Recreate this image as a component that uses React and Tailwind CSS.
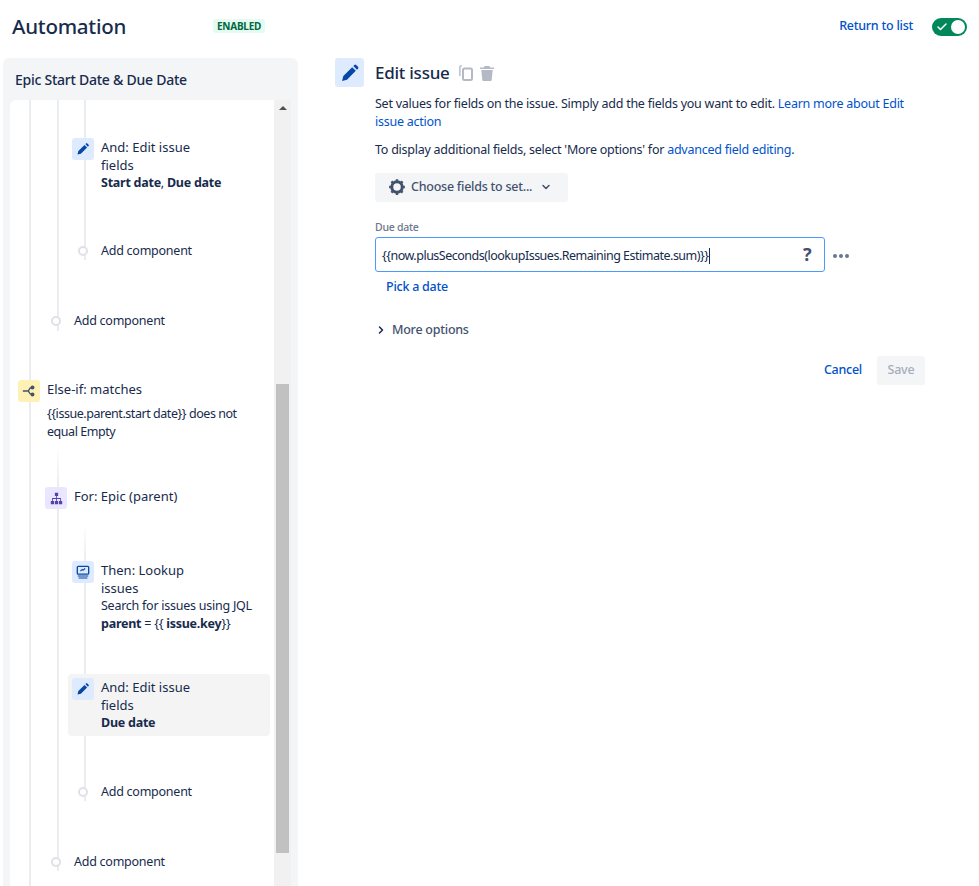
import React from 'react';
import { Check, ChevronDown, ChevronRight } from 'lucide-react';

const font = "font-['Noto_Sans','Open_Sans',sans-serif]";
const nodeTitle = 'text-[13px] tracking-normal';

const PencilIcon = ({ className }) => (
    <svg viewBox="0 0 24 24" className={className} fill="currentColor">
        <path d="M4 15.600 2.500 21.500 8.400 20 19 9.400 14.600 5 4 15.600zM16 3.600l4.400 4.400 1.200-1.200a1.600 1.600 0 0 0 0-2.200L19.400 2.400a1.600 1.600 0 0 0-2.200 0L16 3.600z" />
    </svg>
);

const CopyIcon = ({ className }) => (
    <svg viewBox="0 0 14 16" className={className} fill="none" stroke="currentColor">
        <path d="M3 .9H1.700a.8.8 0 0 0-.8.8V11" strokeWidth="1.400" />
        <rect x="4" y="3.500" width="9" height="11.500" rx="1.500" strokeWidth="2" />
    </svg>
);

const TrashIcon = ({ className }) => (
    <svg viewBox="0 0 16 16" className={className} fill="currentColor">
        <path d="M1 2.500h14V4H1zM5.500 1h5l.6 1.500H4.900zM2.300 5h11.400l-1 10a1 1 0 0 1-1 .9H4.300a1 1 0 0 1-1-.9z" />
    </svg>
);

const BranchIcon = () => (
    <svg viewBox="0 0 16 16" className="w-[14px] h-[14px] text-[#42526e]" fill="none" stroke="currentColor" strokeWidth="1.600">
        <path d="M1 8h6M7 8c1 0 1-4 4-4M7 8c1 0 1 4 4 4" />
        <circle cx="12" cy="4" r="1.500" fill="currentColor" />
        <circle cx="12" cy="12" r="1.500" fill="currentColor" />
    </svg>
);

const HierarchyIcon = () => (
    <svg viewBox="0 0 16 16" className="w-[13px] h-[13px] text-[#5243aa]" fill="currentColor">
        <path d="M6 1h4v4H6zM1 11h4v4H1zM6 11h4v4H6zM11 11h4v4h-4z" />
        <path d="M7.500 5h1v2.500h5V11h-1V8.500h-4V11h-1V8.500h-4V11h-1V7.500h5z" />
    </svg>
);

const LookupIcon = () => (
    <svg viewBox="0 0 16 16" className="w-[14px] h-[14px] text-[#0747a6]" fill="none">
        <rect x="1.500" y="1.500" width="13" height="9" rx="1" stroke="currentColor" strokeWidth="1.500" />
        <path d="M5 7l2-2 1 1 2.500-2" stroke="currentColor" strokeWidth="1.200" />
        <path d="M2 12h12v1.200H2zM3 14.200h10v1.300H3z" fill="currentColor" />
    </svg>
);

const GearIcon = () => (
    <svg viewBox="0 0 24 24" className="w-[18px] h-[18px] text-[#42526e]" fill="none" stroke="currentColor">
        <circle cx="12" cy="12" r="7" strokeWidth="4" />
        <path d="M12 1.500v4M12 18.500v4M1.500 12h4M18.500 12h4M4.600 4.600l2.800 2.800M16.600 16.600l2.800 2.800M19.400 4.600l-2.800 2.800M7.400 16.600l-2.800 2.800" strokeWidth="3.200" />
    </svg>
);

const TreeLine = ({ fade }) => (
    <div className={`absolute left-0 top-0 bottom-0 w-[2px] ${fade ? 'bg-gradient-to-b from-white to-[#ebecf0] to-[40px]' : 'bg-[#ebecf0]'}`} />
);

const NodeIcon = ({ bg, children }) => (
    <div className={`w-[22px] h-[22px] rounded-[3px] flex items-center justify-center shrink-0 ${bg}`}>{children}</div>
);

const AddComponent = ({ className }) => (
    <div className={`relative flex items-center gap-[13px] -ml-[6px] h-[18px] ${className}`}>
        <div className="w-[10px] h-[10px] rounded-full border-2 border-[#dfe1e6] bg-white shrink-0" />
        <span>Add component</span>
    </div>
);

const EditNode = ({ children, className = '' }) => (
    <div className={`relative flex gap-[7px] ${className}`}>
        <NodeIcon bg="bg-[#deebff]"><PencilIcon className="w-[14px] h-[14px] text-[#0747a6]" /></NodeIcon>
        <div className="pt-px">
            <div className={`w-[110px] ${nodeTitle}`}>And: Edit issue fields</div>
            {children}
        </div>
    </div>
);

const App = () => {
    return (
        <div className={`${font} h-screen overflow-hidden bg-white text-[#172b4d] text-[12.5px] leading-[17.5px] tracking-[-0.25px]`}>
            <header className="h-[58px] flex items-center pl-3 pr-3 pb-[6px]">
                <h1 className="text-[20.5px] font-medium leading-none w-[201px]">Automation</h1>
                <span className="bg-[#e3fcef] text-[#006644] text-[10px] font-bold leading-[14px] px-1 rounded-[3px]">ENABLED</span>
                <a className="ml-auto text-[#0052cc] text-[12.5px] font-medium">Return to list</a>
                <div className="ml-[19px] w-[35px] h-[18px] rounded-full bg-[#00875a] flex items-center justify-between px-[2px] mt-px">
                    <Check className="w-[12px] h-[12px] text-white ml-[2px]" strokeWidth={3} />
                    <div className="w-[14px] h-[14px] rounded-full bg-white" />
                </div>
            </header>

            <div className="flex">
                <aside className="ml-[3px] w-[295px] h-[828px] bg-[#f4f5f7] rounded-t-[6px] pl-[7px] pr-[7px] flex flex-col shrink-0">
                    <h2 className="h-[42px] flex items-center pl-[5px] pt-[2px] font-medium text-[14px] shrink-0">Epic Start Date &amp; Due Date</h2>
                    <div className="flex-1 flex min-h-0">
                        <div className="relative w-[264px] bg-white rounded-tl-[6px] overflow-hidden">
                            {/* level 1 line */}
                            <div className="relative ml-[19px] h-full">
                                <TreeLine />
                                {/* first branch */}
                                <div className="relative ml-[28px]">
                                    <div className="relative pb-[1px]">
                                        <TreeLine />
                                        <div className="relative ml-[27px]">
                                            <div className="relative pt-[38px] pb-0">
                                                <TreeLine />
                                                <div className="-ml-[12px]">
                                                    <EditNode>
                                                        <div><b className="font-bold">Start date</b>, <b className="font-bold">Due date</b></div>
                                                    </EditNode>
                                                </div>
                                                <AddComponent className="mt-[50px]" />
                                            </div>
                                        </div>
                                        <AddComponent className="mt-[52px]" />
                                    </div>
                                </div>

                                {/* else-if */}
                                <div className="relative flex gap-[7px] -ml-[11px] mt-[49px]">
                                    <NodeIcon bg="bg-[#fff0b3]"><BranchIcon /></NodeIcon>
                                    <div className="pt-px">
                                        <div className={nodeTitle}>Else-if: matches</div>
                                        <div className="mt-[7px] w-[200px] tracking-[-0.45px]">{'{{issue.parent.start date}}'} does not equal Empty</div>
                                    </div>
                                </div>

                                <div className="relative ml-[28px] mt-[7px] pt-[40px]">
                                    <TreeLine fade />
                                    <div className="relative flex gap-[7px] -ml-[12px]">
                                        <NodeIcon bg="bg-[#eae6ff]"><HierarchyIcon /></NodeIcon>
                                        <div className={`pt-px ${nodeTitle}`}>For: Epic (parent)</div>
                                    </div>
                                    <div className="relative ml-[27px] mt-[14px] pt-[38px]">
                                        <TreeLine fade />
                                        <div className="relative flex gap-[7px] -ml-[12px]">
                                            <NodeIcon bg="bg-[#deebff]"><LookupIcon /></NodeIcon>
                                            <div className="pt-px">
                                                <div className={`w-[110px] ${nodeTitle}`}>Then: Lookup issues</div>
                                                <div>Search for issues using JQL</div>
                                                <div><b className="font-bold">parent</b> = {'{{'} <b className="font-bold">issue.key</b>{'}}'}</div>
                                            </div>
                                        </div>
                                        <div className="relative -ml-[16px] mt-[42px] w-[202px] h-[62px] bg-[#f4f4f4] rounded-[4px] p-[4px]">
                                            <EditNode>
                                                <div className="font-bold">Due date</div>
                                            </EditNode>
                                        </div>
                                        <AddComponent className="mt-[47px]" />
                                    </div>
                                    <AddComponent className="mt-[52px]" />
                                </div>
                            </div>
                        </div>
                        {/* scrollbar */}
                        <div className="w-[17px] bg-[#f1f1f1] flex flex-col items-center shrink-0">
                            <div className="mt-[6px] w-0 h-0 border-l-[4px] border-r-[4px] border-b-[4px] border-l-transparent border-r-transparent border-b-[#505050]" />
                            <div className="mt-[274px] w-[13px] h-[469px] bg-[#c1c1c1]" />
                        </div>
                    </div>
                </aside>

                <main className="ml-[37px] w-[590px] flex gap-[11px]">
                    <div className="w-[29px] h-[29px] rounded-[3px] bg-[#deebff] flex items-center justify-center shrink-0">
                        <PencilIcon className="w-[20px] h-[20px] text-[#0747a6]" />
                    </div>
                    <div className="flex-1">
                        <div className="flex items-center h-[29px]">
                            <h3 className="text-[17px] font-medium">Edit issue</h3>
                            <CopyIcon className="ml-[9px] w-[14px] h-[16px] text-[#b3bac5]" />
                            <TrashIcon className="ml-[6px] w-[16px] h-[16px] text-[#b3bac5]" />
                        </div>
                        <p className="mt-[8px] w-[535px]">
                            Set values for fields on the issue. Simply add the fields you want to edit. <a className="text-[#0052cc]">Learn more about Edit issue action</a>
                        </p>
                        <p className="mt-[11px]">
                            To display additional fields, select 'More options' for <a className="text-[#0052cc]">advanced field editing</a>.
                        </p>
                        <button className="mt-[14px] w-[193px] h-[29px] bg-[#f4f5f7] rounded-[3px] flex items-center pl-[13px] text-[#42526e] font-medium">
                            <GearIcon />
                            <span className="ml-[5px]">Choose fields to set...</span>
                            <ChevronDown className="ml-[8px] w-[12px] h-[12px]" strokeWidth={3} />
                        </button>
                        <label className="block mt-[18px] text-[10.5px] leading-[14px] font-medium text-[#6b778c]">Due date</label>
                        <div className="mt-[3px] flex items-center">
                            <div className="w-[450px] h-[35px] border border-[#4c9aff] rounded-[3px] flex items-center pl-[6px] pr-[13px] pt-[3px] tracking-[-0.5px]">
                                <span>{'{{now.plusSeconds(lookupIssues.Remaining Estimate.sum)}}'}</span>
                                <span className="w-px h-[16px] bg-[#172b4d]" />
                                <span className="ml-auto text-[#42526e] text-[18px] font-bold -mt-[2px]">?</span>
                            </div>
                            <div className="ml-[8px] mt-[4px] flex gap-[2px]">
                                <span className="w-[4px] h-[4px] rounded-full bg-[#6b778c]" />
                                <span className="w-[4px] h-[4px] rounded-full bg-[#6b778c]" />
                                <span className="w-[4px] h-[4px] rounded-full bg-[#6b778c]" />
                            </div>
                        </div>
                        <a className="block mt-[6px] ml-[11px] text-[#0052cc] font-medium">Pick a date</a>
                        <div className="mt-[26px] flex items-center font-medium text-[#42526e]">
                            <ChevronRight className="w-[12px] h-[12px] text-[#172b4d]" strokeWidth={3} />
                            <span className="ml-[5px]">More options</span>
                        </div>
                        <div className="mt-[17px] w-[550px] flex items-center justify-end">
                            <a className="text-[#0052cc] font-medium">Cancel</a>
                            <button className="ml-[15px] w-[48px] h-[29px] bg-[#f4f5f7] rounded-[3px] text-[#a5adba] font-medium">Save</button>
                        </div>
                    </div>
                </main>
            </div>
        </div>
    );
};

export default App;
